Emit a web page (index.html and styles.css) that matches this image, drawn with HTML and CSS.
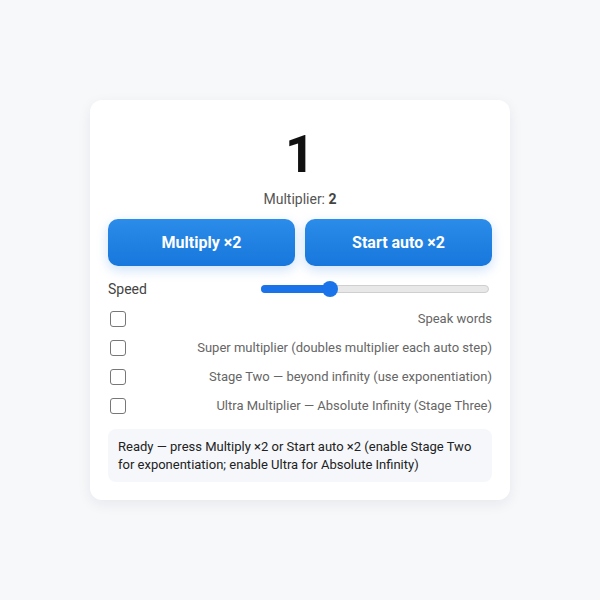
FILE: index.html
```html
<!DOCTYPE html>
<html>
<head>
<meta charset="utf-8">
<link rel="stylesheet" href="styles.css">
</head>
<body>
<div class="card">
  <div class="value">1</div>
  <div class="mult">Multiplier: <b>2</b></div>
  <div class="buttons">
    <button class="btn">Multiply ×2</button>
    <button class="btn">Start auto ×2</button>
  </div>
  <div class="speed">
    <span>Speed</span>
    <div class="slider"><div class="fill" style="width:30%"></div><div class="thumb" style="left:30%"></div></div>
  </div>
  <label class="opt"><span class="box"></span><span class="txt">Speak words</span></label>
  <label class="opt"><span class="box"></span><span class="txt">Super multiplier (doubles multiplier each auto step)</span></label>
  <label class="opt"><span class="box"></span><span class="txt">Stage Two — beyond infinity (use exponentiation)</span></label>
  <label class="opt"><span class="box"></span><span class="txt">Ultra Multiplier — Absolute Infinity (Stage Three)</span></label>
  <div class="status">Ready — press Multiply ×2 or Start auto ×2 (enable Stage Two for exponentiation; enable Ultra for Absolute Infinity)</div>
</div>
</body>
</html>
```
FILE: styles.css
```css
html, body { margin: 0; padding: 0; }
body {
  background: #f7f8fa;
  font-family: Roboto, "Noto Sans", sans-serif;
  width: 600px; height: 600px;
  display: flex; justify-content: center; align-items: flex-start;
}
.card {
  margin-top: 100px;
  width: 384px;
  padding: 18px 18px 18px;
  background: #fff;
  border-radius: 12px;
  box-shadow: 0 4px 14px rgba(20,30,60,0.07);
  display: flex; flex-direction: column;
}
.value {
  text-align: center;
  font-size: 52px; font-weight: 700; color: #111;
  line-height: 60px;
  margin-top: 7px;
}
.mult {
  text-align: center; font-size: 14px; color: #555;
  margin-top: 5px; line-height: 18px;
}
.mult b { color: #444; }
.buttons { display: flex; gap: 10px; margin-top: 11px; }
.btn {
  flex: 1; height: 47px; border: 0; border-radius: 10px;
  background: linear-gradient(#2b8ce9, #1877dc);
  color: #fff; font-family: inherit; font-size: 16px; font-weight: 700;
  box-shadow: 0 4px 12px rgba(26,120,220,0.22);
}
.speed {
  display: flex; align-items: center; justify-content: space-between;
  margin-top: 14px; height: 18px; font-size: 14px; color: #444;
}
.slider {
  position: relative; width: 228px; height: 8px; margin-right: 3px;
  background: #e8e8e8; border: 1px solid #cfcfcf; border-radius: 5px; box-sizing: border-box;
}
.fill { position: absolute; left: -1px; top: -1px; bottom: -1px; background: #1a73e8; border-radius: 5px; }
.thumb {
  position: absolute; top: 50%; width: 16px; height: 16px; margin: -8px 0 0 -8px;
  background: #1a73e8; border-radius: 50%;
}
.opt {
  display: flex; align-items: center; justify-content: space-between;
  height: 29px; font-size: 13px; color: #666;
}
.opt:first-of-type { margin-top: 6px; }
.box {
  width: 16px; height: 16px; border: 1.5px solid #777; border-radius: 3px;
  margin-left: 2px; box-sizing: border-box;
}
.status {
  margin-top: 9px;
  background: #f5f7fb; border-radius: 8px;
  padding: 9px 10px 8px; font-size: 13px; line-height: 18px; color: #222;
}
```
